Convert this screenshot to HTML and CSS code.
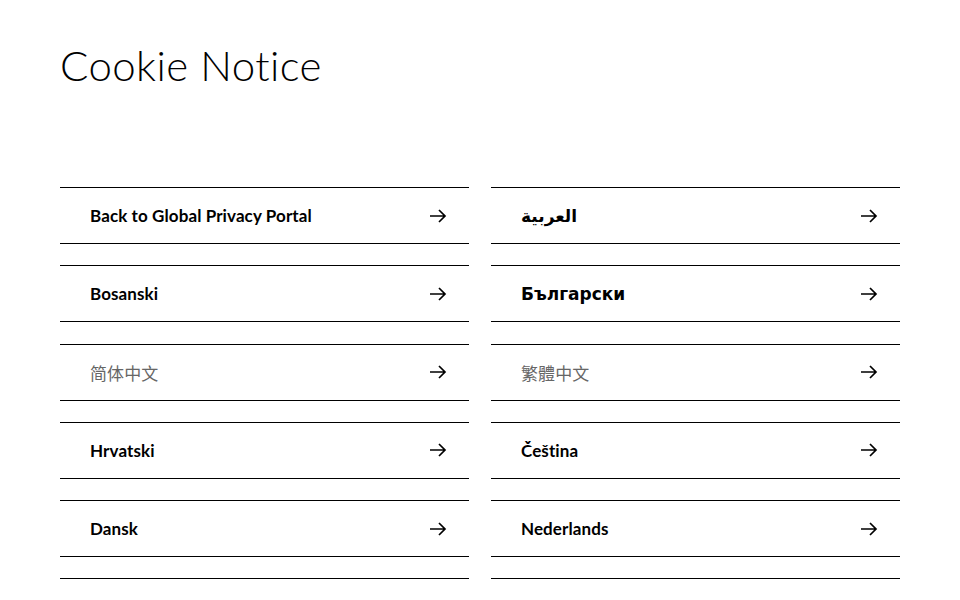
FILE: index.html
```html
<!DOCTYPE html>
<html lang="en">
<head>
    <meta charset="UTF-8">
    <meta name="viewport" content="width=device-width, initial-scale=1.0">
    <title>Cookie Notice</title>
    <link rel="stylesheet" href="styles.css">
</head>
<body>
    <div class="container">
        <h1>Cookie Notice</h1>
        <ul class="lang-list">
            <li><a href="#">Back to Global Privacy Portal <span class="arrow"><svg viewBox="0 0 20 20"><path d="M2 10h15M11 4l6 6-6 6"/></svg></span></a></li>
            <li><a href="#" class="fallback" lang="ar">العربية <span class="arrow"><svg viewBox="0 0 20 20"><path d="M2 10h15M11 4l6 6-6 6"/></svg></span></a></li>
            <li><a href="#">Bosanski <span class="arrow"><svg viewBox="0 0 20 20"><path d="M2 10h15M11 4l6 6-6 6"/></svg></span></a></li>
            <li><a href="#" class="fallback">Български <span class="arrow"><svg viewBox="0 0 20 20"><path d="M2 10h15M11 4l6 6-6 6"/></svg></span></a></li>
            <li><a href="#" class="cjk" lang="zh-CN">简体中文 <span class="arrow"><svg viewBox="0 0 20 20"><path d="M2 10h15M11 4l6 6-6 6"/></svg></span></a></li>
            <li><a href="#" class="cjk" lang="zh-TW">繁體中文 <span class="arrow"><svg viewBox="0 0 20 20"><path d="M2 10h15M11 4l6 6-6 6"/></svg></span></a></li>
            <li><a href="#">Hrvatski <span class="arrow"><svg viewBox="0 0 20 20"><path d="M2 10h15M11 4l6 6-6 6"/></svg></span></a></li>
            <li><a href="#">Čeština <span class="arrow"><svg viewBox="0 0 20 20"><path d="M2 10h15M11 4l6 6-6 6"/></svg></span></a></li>
            <li><a href="#">Dansk <span class="arrow"><svg viewBox="0 0 20 20"><path d="M2 10h15M11 4l6 6-6 6"/></svg></span></a></li>
            <li><a href="#">Nederlands <span class="arrow"><svg viewBox="0 0 20 20"><path d="M2 10h15M11 4l6 6-6 6"/></svg></span></a></li>
            <li><a href="#">English <span class="arrow"><svg viewBox="0 0 20 20"><path d="M2 10h15M11 4l6 6-6 6"/></svg></span></a></li>
            <li><a href="#">Eesti <span class="arrow"><svg viewBox="0 0 20 20"><path d="M2 10h15M11 4l6 6-6 6"/></svg></span></a></li>
        </ul>
    </div>
</body>
</html>
```

FILE: styles.css
```css
body {
    margin: 0;
    font-family: "Lato", "DejaVu Sans", sans-serif;
    color: #000;
    background-color: #fff;
}
.container {
    padding: 0 60px;
}
h1 {
    font-size: 42px;
    font-weight: 300;
    margin: 0;
    padding-top: 39px;
    line-height: 52px;
    letter-spacing: 0.4px;
}
.lang-list {
    list-style: none;
    margin: 96px 0 0 0;
    padding: 0;
    display: grid;
    grid-template-columns: 1fr 1fr;
    column-gap: 22px;
    row-gap: 21.25px;
}
.lang-list a {
    display: flex;
    align-items: center;
    justify-content: space-between;
    height: 55px;
    padding: 0 21px 0 30px;
    border-top: 1px solid #000;
    border-bottom: 1px solid #000;
    color: #000;
    text-decoration: none;
    font-size: 17px;
    font-weight: 700;
    letter-spacing: 0.1px;
}
.lang-list a.fallback {
    font-family: "DejaVu Sans", sans-serif;
    font-size: 17px;
    letter-spacing: 0;
}
.lang-list a.cjk {
    font-family: "Noto Sans CJK SC", sans-serif;
    font-weight: 400;
    color: #666;
}
.arrow {
    display: flex;
    width: 20px;
    height: 20px;
}
.arrow svg {
    width: 20px;
    height: 20px;
    fill: none;
    stroke: #000;
    stroke-width: 1.7;
}
```
